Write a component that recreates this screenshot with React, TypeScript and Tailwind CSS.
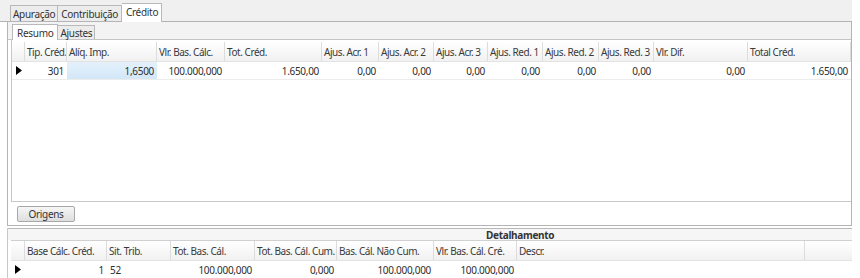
type Col = { h: string; w: number; v?: string; right?: boolean; sel?: boolean };

const topCols: Col[] = [
  { h: "Tip. Créd.", w: 42, v: "301", right: true },
  { h: "Alíq. Imp.", w: 90, v: "1,6500", right: true, sel: true },
  { h: "Vlr. Bas. Cálc.", w: 68, v: "100.000,000", right: true },
  { h: "Tot. Créd.", w: 97, v: "1.650,00", right: true },
  { h: "Ajus. Acr. 1", w: 57, v: "0,00", right: true },
  { h: "Ajus. Acr. 2", w: 55, v: "0,00", right: true },
  { h: "Ajus. Acr. 3", w: 54, v: "0,00", right: true },
  { h: "Ajus. Red. 1", w: 55, v: "0,00", right: true },
  { h: "Ajus. Red. 2", w: 56, v: "0,00", right: true },
  { h: "Ajus. Red. 3", w: 55, v: "0,00", right: true },
  { h: "Vlr. Dif.", w: 94, v: "0,00", right: true },
  { h: "Total Créd.", w: 103, v: "1.650,00", right: true },
];

const bottomCols: Col[] = [
  { h: "Base Cálc. Créd.", w: 82, v: "1", right: true },
  { h: "Sit. Trib.", w: 64, v: "52" },
  { h: "Tot. Bas. Cál.", w: 84, v: "100.000,000", right: true },
  { h: "Tot. Bas. Cál. Cum.", w: 82, v: "0,000", right: true },
  { h: "Bas. Cál. Não Cum.", w: 97, v: "100.000,000", right: true },
  { h: "Vlr. Bas. Cál. Cré.", w: 83, v: "100.000,000", right: true },
  { h: "Descr.", w: 288, v: "" },
];

function Arrow() {
  return (
    <svg width="6" height="9" viewBox="0 0 6 9">
      <path d="M0 0 L6 4.5 L0 9 Z" fill="#000" />
    </svg>
  );
}

function HeaderRow({ cols, filler }: { cols: Col[]; filler?: boolean }) {
  return (
    <div className="flex h-[20px] bg-gradient-to-b from-white to-[#f1f1f1] border-b border-[#e3e3e3]">
      <div className="w-[14px] border-r border-[#dcdcdc]" />
      {cols.map((c) => (
        <div
          key={c.h}
          style={{ width: c.w }}
          className="shrink-0 border-r border-[#dcdcdc] pl-[2px] flex items-center whitespace-nowrap overflow-hidden text-[#3a3a3a] tracking-[-0.45px]"
        >
          {c.h}
        </div>
      ))}
      {filler && <div className="flex-1" />}
    </div>
  );
}

function DataRow({ cols }: { cols: Col[] }) {
  return (
    <div className="flex h-[18px] border-b border-[#ececec]">
      <div className="w-[14px] flex items-center justify-center">
        <Arrow />
      </div>
      {cols.map((c) => (
        <div
          key={c.h}
          style={{ width: c.w }}
          className={
            "shrink-0 px-[3px] flex items-center whitespace-nowrap text-[#2e2e2e] " +
            (c.right ? "justify-end " : "justify-start ") +
            (c.sel ? "bg-gradient-to-b from-[#e4f1fb] to-[#d3e7f7]" : "")
          }
        >
          {c.v}
        </div>
      ))}
    </div>
  );
}

export default function App() {
  return (
    <div
      className="w-[860px] h-[278px] bg-white overflow-hidden text-[10px] leading-none tracking-[-0.3px]"
      style={{ fontFamily: '"Noto Sans", "Open Sans", sans-serif' }}
    >
      <div className="w-[852px] flex flex-col">
        {/* outer tabs */}
        <div className="h-[22px] bg-[#f0f0f0] flex items-end pl-[10px] border-b border-[#b4b4b4]">
          <div className="h-[16px] border border-b-0 border-[#b9b9b9] bg-[#ececec] flex items-center px-[2px] text-[#333]">
            Apuração
          </div>
          <div className="h-[16px] border border-b-0 border-l-0 border-[#b9b9b9] bg-[#ececec] flex items-center px-[3px] text-[#333]">
            Contribuição
          </div>
          <div className="h-[19px] border border-b-0 border-l-0 border-[#b9b9b9] bg-white flex items-start pt-[3px] pl-[4px] pr-[3px] -mb-px text-[#333]">
            Crédito
          </div>
        </div>

        {/* outer panel */}
        <div className="ml-[7px] h-[204px] border-l border-r border-b border-[#b4b4b4] flex flex-col">
          <div className="h-[18px] bg-[#f3f3f3] flex items-end pl-[4px] border-b border-[#c4c4c4]">
            <div className="h-[16px] border border-b-0 border-[#b9b9b9] bg-white flex items-center px-[4px] -mb-px text-[#333]">
              Resumo
            </div>
            <div className="h-[14px] border border-b-0 border-l-0 border-[#b9b9b9] bg-[#ececec] flex items-center px-[2px] text-[#333]">
              Ajustes
            </div>
          </div>
          <div className="ml-[3px] h-[162px] border-l border-b border-[#c8c8c8] bg-white pt-[2px] flex flex-col">
            <HeaderRow cols={topCols} />
            <DataRow cols={topCols} />
          </div>
          <div className="flex-1 flex items-center pl-[9px]">
            <button className="h-[16px] w-[58px] border border-[#a8a8a8] rounded-[2px] bg-gradient-to-b from-[#f6f6f6] to-[#dedede] text-[#333] text-[10px] flex items-center justify-center">
              Origens
            </button>
          </div>
        </div>

        {/* detail */}
        <div className="ml-[7px] mt-[2px] border-l border-[#c8c8c8] flex flex-col">
          <div className="h-[12px] bg-[#f6f6f6] border-t border-[#b8b8b8] flex items-center pl-[478px] font-bold text-[10px] text-[#333]">
            Detalhamento
          </div>
          <div className="ml-[3px] border-t border-[#d0d0d0]">
            <HeaderRow cols={bottomCols} filler />
            <DataRow cols={bottomCols} />
          </div>
        </div>
      </div>
    </div>
  );
}
